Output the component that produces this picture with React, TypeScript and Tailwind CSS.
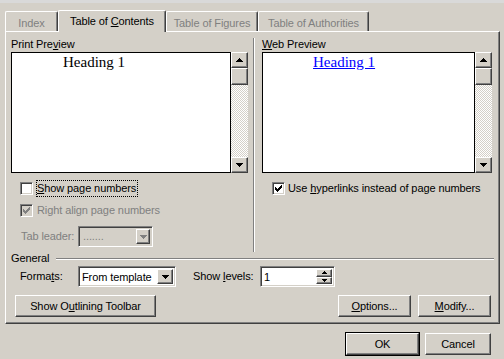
import React from 'react';

const raised =
  "bg-[#d4d0c8] border border-t-white border-l-white border-r-[#404040] border-b-[#404040] shadow-[inset_-1px_-1px_0_#808080]";
const sunken =
  "border border-t-[#808080] border-l-[#808080] border-r-white border-b-white shadow-[inset_1px_1px_0_#404040,inset_-1px_-1px_0_#d4d0c8]";

const Arrow = ({ up = false, color = "#000", small = false }: { up?: boolean; color?: string; small?: boolean }) => {
  const d = small
    ? up
      ? "M2 0h1v1H2z M1 1h3v1H1z M0 2h5v1H0z"
      : "M0 0h5v1H0z M1 1h3v1H1z M2 2h1v1H2z"
    : up
      ? "M3 0h1v1H3z M2 1h3v1H2z M1 2h5v1H1z M0 3h7v1H0z"
      : "M0 0h7v1H0z M1 1h5v1H1z M2 2h3v1H2z M3 3h1v1H3z";
  return (
    <svg width={small ? 5 : 7} height={small ? 3 : 4} shapeRendering="crispEdges">
      <path d={d} fill={color} />
    </svg>
  );
};

const ScrollBar = () => (
  <div className="flex w-[17px] flex-col">
    <div className={`${raised} flex h-[16px] items-center justify-center`}>
      <Arrow up />
    </div>
    <div className={`${raised} h-[17px]`} />
    <div className="flex-1 bg-[image:conic-gradient(#ffffff_25%,#d4d0c8_0_50%,#ffffff_0_75%,#d4d0c8_0)] bg-[length:2px_2px]" />
    <div className={`${raised} flex h-[16px] items-center justify-center`}>
      <Arrow />
    </div>
  </div>
);

const Checkbox = ({ checked = false, disabled = false }: { checked?: boolean; disabled?: boolean }) => (
  <div className={`${sunken} flex h-[13px] w-[13px] shrink-0 items-center justify-center ${disabled ? "bg-[#d4d0c8]" : "bg-white"}`}>
    {checked && (
      <svg width="7" height="7" shapeRendering="crispEdges">
        <path
          d="M0 2h1v3H0z M1 3h1v3H1z M2 4h1v3H2z M3 3h1v3H3z M4 2h1v3H4z M5 1h1v3H5z M6 0h1v3H6z"
          fill={disabled ? "#808080" : "#000"}
        />
      </svg>
    )}
  </div>
);

const Tab = ({ label, w, active = false }: { label: React.ReactNode; w: string; active?: boolean }) => (
  <div
    className={`${w} flex justify-center rounded-t-[2px] border-t border-l border-t-white border-l-white border-r border-r-[#404040] shadow-[inset_-1px_0_0_#808080] bg-[#d4d0c8] ${
      active ? "relative z-10 mb-[-1px] h-[22px] pt-[4px] text-black" : "h-[20px] pt-[5px] text-[#808080]"
    }`}
  >
    <span className="h-[13px] whitespace-nowrap">{label}</span>
  </div>
);

const Button = ({ children, w }: { children: React.ReactNode; w: string }) => (
  <div className={`${raised} ${w} flex h-[22px] items-center justify-center whitespace-nowrap`}>{children}</div>
);

export default function App() {
  return (
    <div className="h-[359px] w-[504px] overflow-hidden bg-[#d4d0c8] font-['Liberation_Sans',Arial,sans-serif] text-[11px] leading-[13px] tracking-[-0.1px] text-black">
      <div className="h-[3px] bg-[#d9d9d9]" />
      <div className="px-[5px] pt-[7px]">
        {/* tabs */}
        <div className="flex h-[21px] items-end">
          <Tab label="Index" w="w-[53px]" />
          <Tab label={<>Table of <u>C</u>ontents</>} w="w-[108px]" active />
          <Tab label="Table of Figures" w="w-[92px]" />
          <Tab label="Table of Authorities" w="w-[111px]" />
        </div>

        {/* panel */}
        <div className="relative flex h-[293px] w-[495px] flex-col border border-t-white border-l-white border-r-[#404040] border-b-[#404040] shadow-[inset_-1px_-1px_0_#808080]">
          <div className="mt-[6px] flex h-[214px]">
            {/* print preview */}
            <div className="flex w-[247px] flex-col pl-[5px]">
              <div className="h-[13px]">
                Print Pre<u>v</u>iew
              </div>
              <div className="mt-[1px] flex h-[121px] w-[237px]">
                <div className="flex-1 border border-black bg-white pl-[51px] pt-[1px]">
                  <span className="font-['Liberation_Serif','Times_New_Roman',serif] text-[15px] leading-[17px] tracking-normal">Heading 1</span>
                </div>
                <ScrollBar />
              </div>
              <div className="mt-[7px] flex h-[17px] items-center pl-[9px]">
                <Checkbox />
                <span className="ml-[3px] border border-dotted border-black pr-[1px] leading-[15px]">
                  <u>S</u>how page numbers
                </span>
              </div>
              <div className="mt-[5px] flex h-[17px] items-center pl-[9px]">
                <Checkbox checked disabled />
                <span className="ml-[4px] text-[#808080]">Right align page numbers</span>
              </div>
              <div className="mt-[7px] flex h-[21px] items-center pl-[10px]">
                <span className="w-[57px] text-[#808080]">Tab leader:</span>
                <div className={`${sunken} flex h-[21px] w-[75px] items-stretch bg-[#d4d0c8] p-[2px]`}>
                  <span className="flex-1 pl-[2px] leading-[15px] text-[#808080]">.......</span>
                  <div className={`${raised} flex w-[14px] items-center justify-center`}>
                    <Arrow color="#808080" />
                  </div>
                </div>
              </div>
            </div>

            {/* web preview */}
            <div className="flex flex-1 flex-col border-l border-l-[#808080] pl-[8px] shadow-[inset_1px_0_0_#ffffff]">
              <div className="h-[13px]">
                <u>W</u>eb Preview
              </div>
              <div className="mt-[1px] flex h-[121px] w-[230px]">
                <div className="flex-1 border border-black bg-white pl-[50px] pt-[1px]">
                  <span className="font-['Liberation_Serif','Times_New_Roman',serif] text-[15px] leading-[17px] tracking-normal text-[#0000ff] underline">
                    Heading 1
                  </span>
                </div>
                <ScrollBar />
              </div>
              <div className="mt-[7px] flex h-[17px] items-center pl-[10px]">
                <Checkbox checked />
                <span className="ml-[3px]">
                  Use <u>h</u>yperlinks instead of page numbers
                </span>
              </div>
            </div>
          </div>

          {/* general */}
          <div className="flex h-[13px] items-center pl-[5px]">
            <span>General</span>
            <div className="ml-[7px] mr-[5px] h-[2px] flex-1 border-t border-b border-t-[#808080] border-b-white" />
          </div>
          <div className="mt-[1px] flex h-[21px] items-center pl-[14px]">
            <span className="w-[58px]">
              Forma<u>t</u>s:
            </span>
            <div className={`${sunken} flex h-[21px] w-[98px] items-stretch bg-white p-[2px]`}>
              <span className="flex-1 pl-[1px] leading-[16px]">From template</span>
              <div className={`${raised} flex w-[16px] items-center justify-center`}>
                <Arrow />
              </div>
            </div>
            <span className="ml-[17px] w-[67px]">
              Show <u>l</u>evels:
            </span>
            <div className={`${sunken} flex h-[21px] w-[75px] items-stretch bg-white p-[2px]`}>
              <span className="flex-1 pl-[1px] leading-[16px]">1</span>
              <div className="flex w-[16px] flex-col">
                <div className={`${raised} flex h-[9px] items-center justify-center`}>
                  <Arrow up small />
                </div>
                <div className={`${raised} flex h-[8px] items-center justify-center`}>
                  <Arrow small />
                </div>
              </div>
            </div>
          </div>
          <div className="mt-[8px] flex h-[22px] items-center pl-[9px] pr-[8px]">
            <Button w="w-[141px]">
              Show O<u>u</u>tlining Toolbar
            </Button>
            <div className="flex-1" />
            <Button w="w-[73px]">
              <u>O</u>ptions...
            </Button>
            <div className="w-[7px]" />
            <Button w="w-[73px]">
              <u>M</u>odify...
            </Button>
          </div>
        </div>

        {/* dialog buttons */}
        <div className="mt-[8px] flex items-center justify-end gap-[5px] pr-[8px]">
          <div className="h-[24px] w-[75px] border border-black">
            <Button w="w-full">OK</Button>
          </div>
          <Button w="w-[66px]">Cancel</Button>
        </div>
      </div>
    </div>
  );
}
